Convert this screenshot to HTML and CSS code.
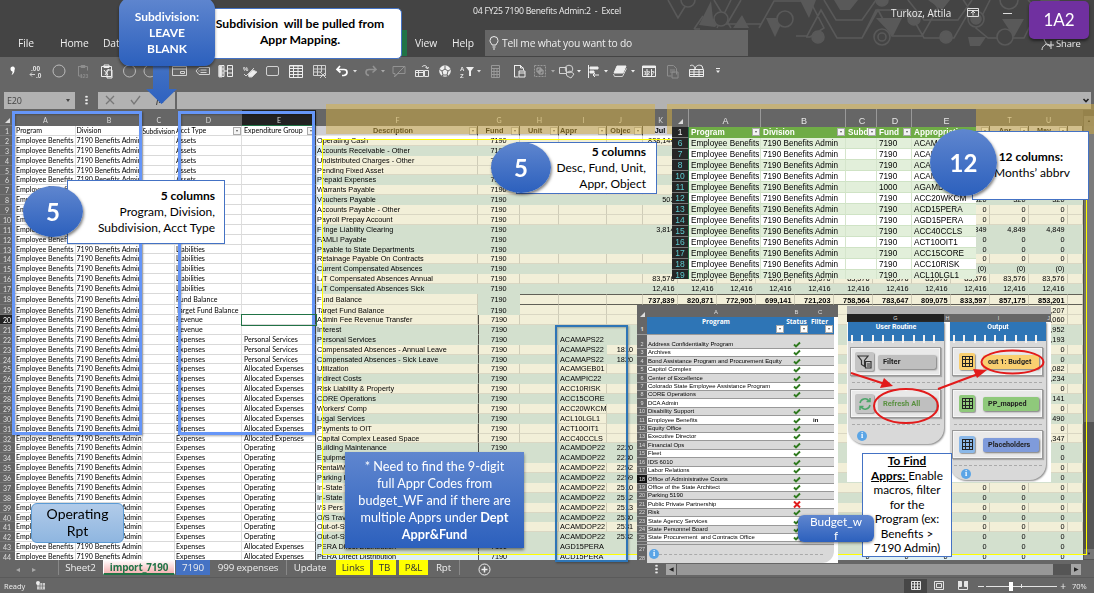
FILE: index.html
```html
<!DOCTYPE html>
<html lang="en">
<head>
<meta charset="utf-8">
<title>04 FY25 7190 Benefits Admin</title>
<link rel="stylesheet" href="styles.css">
</head>
<body>
<div class="app">
  <header class="titlebar">
    <svg class="pattern" width="434" height="57" viewBox="660 0 434 57" fill="none" stroke="#595959" stroke-width="1.6">
      <path d="M668 0l10 18 11-18M694 29l9-13M700 29h-6M714 0l17 28M731 0l-14 28M759 28l15-27h36l14 27-14 9h-4M741 0l-14 24h34M796 36h11l14-26 16 28h25l16-28 14 26h30l16-28-16-24M824 0l12 20h26l14-20M862 38l14-28h32l16 28h30l16-28-16-24M990 0l-14 28 12 10h36l14-28-10-10M908 0l16 20h34l14-20"/>
      <path d="M699 25l12-24 2 18h10l-8 8zM733 28l9-13 7 13zM800 0h16l-7 18zM834 0h24l-8 10h-10zM876 18h26l-9 18zM928 0h22l-8 10zM1002 19h22l-10 18zM968 37h18l-6 9h-10zM1040 0h20l-10 14z" fill="#595959" stroke="none"/>
      <path d="M766 18h18l-9 19z" fill="#595959" stroke="none"/>
      <g fill="#444"><circle cx="688" cy="0" r="7"/><circle cx="721" cy="19" r="7"/><circle cx="785" cy="19" r="8"/><circle cx="882" cy="37" r="8"/><circle cx="976" cy="19" r="8"/><circle cx="1005" cy="37" r="8"/><circle cx="1009" cy="0" r="9"/></g>
      <g fill="#595959"><circle cx="818" cy="37" r="6"/><circle cx="882" cy="0" r="6"/><circle cx="914" cy="19" r="6"/><circle cx="946" cy="37" r="6"/><circle cx="882" cy="37" r="4" fill="#444"/><circle cx="976" cy="19" r="5"/></g>
    </svg>
    <div class="title">04 FY25 7190 Benefits Admin:2&nbsp; -&nbsp; Excel</div>
    <div class="user">Turkoz, Attila</div>
    <svg class="winicons" width="50" height="14" viewBox="0 0 50 14" fill="none" stroke="#ddd"><path d="M.5 2.500h11v8H.5zM.5 4.500h11M6 9.500v-4M4 7l2-2 2 2M36 7.500h9"/></svg>
    <nav class="ribbon">
      <span class="rt file">File</span><span class="rt home">Home</span><span class="rt data">Data</span>
      <span class="active-edge"></span><span class="rt view">View</span><span class="rt help">Help</span>
      <div class="tell"><svg width="10" height="14" viewBox="0 0 10 14" fill="none" stroke="#eee"><path d="M3 9C3 7.500 1 7 1 4.500a4 4 0 0 1 8 0C9 7 7 7.500 7 9zM3.500 11h3M4 13h2"/></svg><span>Tell me what you want to do</span></div>
      <span class="share">Share</span>
      <svg class="shareicon" width="14" height="13" viewBox="0 0 14 13" fill="none" stroke="#ddd"><path d="M3 0c0 4 4 5 1 7-2 1-3 3-3 5M10 3v8M6 7h7M5 6c3 0 4 2 4 3"/></svg>
    </nav>
  </header>

  <div class="qat">
    <svg width="1094" height="33" viewBox="0 57 1094 33" fill="none" stroke="#d2d2d2" stroke-width="1">
      <path d="M10.500 69a2.200 2.200 0 1 1 4 1c0 2.500-1 4-3 5 .8-1.500 1.200-2.500 1-3.500-1 0-2-1-2-2.500z" fill="#fff" stroke="none"/>
      <text x="31" y="70.500" class="mini lg">.00</text><text x="36" y="77.500" class="mini lg">.0</text><path d="M30 74.500h5M32 72.500l-2 2 2 2"/>
      <g stroke="#bbb"><circle cx="59" cy="71" r="6"/><circle cx="129.500" cy="71" r="6"/><circle cx="150" cy="71" r="6"/></g>
      <g stroke="#8d8d8d"><path d="M78.500 66v10h4M78.500 66.500h9v4M81 65.500h4v2h-4z"/><text x="80" y="78" class="mini dim">123</text></g>
      <path d="M101.500 66.500h10v10h-10zM104 65h5v2.500h-5z" stroke="#eee"/><path d="M104 70l4 5M109 69l-4 6M107 70h5v8h-5z" stroke="#eee"/>
      <path d="M172.500 66.500h14v9h-14zM172.500 69h14M180.500 71.500h4v2h-4z"/>
      <path d="M199 67.500h10.500v7H199l-3-3.500zM200.500 70h6M200.500 72.500h6M198.500 71h1"/>
      <path d="M219 65.500h5v11h-5zM227.500 65.500h5v11h-5zM219 69h5M219 73h5M227 69h5M227 73h5M224 71h4" stroke="#eee"/>
      <path d="M219 66h3v11h-3z" fill="#eee"/>
      <path d="M248 74l5-4 4 2-5 5h-3z" fill="#eee"/><text x="243" y="71" class="mini">%</text><path d="M244 74l2 2 8-8"/>
      <rect x="266.500" y="66.500" width="12" height="9" rx="1.500"/>
      <path d="M289.500 65.500h13v12h-13zM289.500 68.500h13M289.500 71.500h13M289.500 74.500h13M293.500 66v11M298 66v11M289.500 66h13" stroke="#eee"/>
      <path d="M313.500 65.500h12v10h-12zM313.500 69h12M313.500 72h8M317.500 66v10M321.500 66v6M320 72l6 6M326 72l-6 6"/>
      <path d="M340 66l-3 3.500 3.500 3M337 69.500h7c4 0 4 5 0 6h-2" stroke="#fff" stroke-width="1.700"/>
      <path d="M353 70h4l-2 2.500z" fill="#ddd" stroke="none"/>
      <path d="M373 66l3 3.500-3.500 3M376 69.500h-7c-4 0-4 5 0 6" stroke="#929292" stroke-width="1.600"/><path d="M381 70h4l-2 2.500z" fill="#aaa" stroke="none"/>
      <path d="M393 66.500h12v7h-7l-3 3v-3h-2zM394 77l11-11" stroke="#929292"/>
      <path d="M415.500 70.500h8v6h-8zM415.500 72.500h8M418.500 70.500v6M422 67c1-2 5-2 5 1M425.500 67l2 2 1-2M424.500 70.500h4v6h-4z" stroke="#e6e6e6"/>
      <circle cx="445" cy="71" r="5.800" fill="#eee" stroke="none"/><path d="M445 69l3 2-1 4h-4l-1-4zM445 65.500V69M450.500 69.500l-2.500 1.500M447 75l1.500 1.500M443 75l-1.500 1.500M439.500 69.500l2.500 1.500" stroke="#666"/>
      <text x="460" y="70.500" class="mini">A</text><text x="460" y="77.500" class="mini">Z</text><path d="M466 67h8l-3 4v5h-2v-5z" fill="#eee" stroke="none"/><path d="M477 70h4l-2 2.500z" fill="#ddd" stroke="none"/>
      <path d="M491.500 65.500h8v12h-8zM491.500 68.500h8M491.500 71.500h8M491.500 74.500h8M494 69v9M497 69v9" stroke="#999"/>
      <path d="M514.500 65.500h6l3 3v2M514.500 65v12h4M520.500 65v3h3M519 71h6v6h-6zM519 73h6" stroke="#eee"/>
      <path d="M534.500 65.500h11v11h-11z" stroke="#999" stroke-dasharray="2 1"/><path d="M537 68h4v4h-4zM539 70h4v4h-4z" stroke="#aaa"/><path d="M551 70h4l-2 2.500z" fill="#aaa" stroke="none"/>
      <path d="M559.500 67.500h7v6h-7z"/><circle cx="569" cy="69" r="3.800"/><path d="M566 73l4-2 4 3-3 4-4-2z"/><path d="M577 70h4l-2 2.500z" fill="#eee" stroke="none"/>
      <path d="M588.500 65v13M590 67h8v2h-8zM590 71h4v2h-4z" fill="#eee" stroke="#eee"/><path d="M599 75h-6M595 73l-2 2 2 2" stroke="#eee"/><path d="M604 70h4l-2 2.500z" fill="#eee" stroke="none"/>
      <path d="M617 66h9l-3 7-9 0z" fill="#eee" stroke="#eee"/><path d="M613.500 74l1 2.500h8l4-8"/><path d="M631 70h4l-2 2.500z" fill="#eee" stroke="none"/>
      <path d="M642.500 66h13v10.500h-13zM642.500 67.500h13M642.500 66.500h13M647 69v7M651.500 69v7" stroke="#eee"/><text x="643.500" y="75" class="mini">12</text><text x="651" y="75" class="mini">?</text>
      <path d="M667.500 65.500h6l3 3v6M667.500 66v10h4M670 70h5M670 72h5M672 72h6v6h-6z" stroke="#8d8d8d"/>
      <path d="M689.500 69.500h14v7h-14zM689.500 72h14M689.500 74.500h14M694 69v7M699 69v7M690 66c2-2 5 0 5 3 0-3 4-5 7-3l1 3" stroke="#eee"/>
      <path d="M716 68h4v1h-4zM716 70.500h4l-2 2.500z" fill="#eee" stroke="none"/>
    </svg>
  </div>

  <div class="formulabar">
    <div class="namebox"><span>E20</span><i class="tri"></i></div>
    <div class="dots"></div>
    <div class="fxbox"><svg width="76" height="17" viewBox="0 0 76 17" fill="none" stroke="#777" stroke-width="1.300"><path d="M8 4l8 8M16 4l-8 8M33 8l3 4 6-8"/></svg><span class="fx">fx</span></div>
    <div class="finput"><svg width="8" height="6" viewBox="0 0 8 6" fill="none" stroke="#222" stroke-width="1.600"><path d="M1.500 1L4 3.500 6.500 1"/></svg></div>
  </div>

  <main class="sheetwrap">
    <div class="sheet" id="sheet"></div>
    <div class="vscroll"><span class="vbtn">▲</span><span class="vthumb"></span><span class="vbtn">▼</span></div>
  </main>

  <div class="tabbar">
    <div class="tabs">
      <span class="nav">◂</span><span class="nav nav2">▸</span>
      <span class="tab t-sheet">Sheet2</span><span class="tab t-import">import_7190</span><span class="tab t-7190">7190</span><span class="tab t-999">999 expenses</span><span class="tab t-upd">Update</span><span class="tab yel t-links">Links</span><span class="tab yel t-tb">TB</span><span class="tab yel t-pl">P&amp;L</span><span class="tab t-rpt">Rpt</span>
      <svg class="plus" width="13" height="13" viewBox="0 0 13 13" fill="none" stroke="#eee"><circle cx="6.500" cy="6.500" r="5.500"/><path d="M6.500 3.500v6M3.500 6.500h6" stroke-width="1.500"/></svg>
    </div>
    <div class="dots low"></div>
    <div class="hscroll"><span class="hbtn">◀</span><span class="hthumb"></span><span class="hbtn">▶</span></div>
  </div>
  <footer class="status">
    <span>Ready</span>
    <svg width="10" height="9" viewBox="0 0 10 9"><path d="M1 2h8v6.500H1z" fill="#ccc"/><circle cx="2" cy="2" r="2" fill="#eee"/><path d="M1 5h8M4 2v6M6.500 2v6" stroke="#666" stroke-width=".6"/></svg>
    <svg class="zoomctl" width="154" height="14" viewBox="904 579 154 14" fill="none" stroke="#e4e4e4"><rect x="904" y="579" width="23" height="14" fill="#464646" stroke="none"/><path d="M911.500 581.500h9v8h-9zM911.500 584h9M911.500 587h9M914.500 581.500v8M917.500 581.500v8M934.500 581.500h9v8h-9zM936.500 583.500h5v4h-5z"/><path d="M958.500 581.500h3v5h-3zM964.500 581.500h3v5h-3z" fill="#e4e4e4"/><path d="M958.500 581v8.500h9V581"/><path d="M978 586.500h6M986 586.500h71"/><path d="M1009 582h4v9h-4z" fill="#fff" stroke="none"/><path d="M1021.500 584v4"/></svg>
    <span class="zplus">+</span><span class="pct">70%</span>
  </footer>

  <div class="yellowarea"></div>
  <div class="yellowline"></div>
  <div class="gold gold1"></div>
  <div class="gold gold2"></div>
  <div class="frame frame1"></div>
  <div class="frame frame2"></div>
  <div class="frame frame3"></div>
  <div class="selected"></div>

  <section class="apprs" id="apprs"></section>
  <section class="programs" id="programs"></section>

  <section class="macros">
    <div class="mtop"></div>
    <div class="mhead"><b class="sel">G</b><b class="h">H</b><b class="i">I</b><b class="j">J</b></div>
    <div class="mcols">
      <div class="mcard routine">
        <div class="mtitle">User Routine</div><div class="rings"></div>
        <div class="mgroup"><span class="ico"><svg width="16" height="14" viewBox="0 0 16 14" fill="none" stroke="#333" stroke-width="1.200"><path d="M1 1h10L7.500 5.500v6l-3-2v-4zM8.500 6.500h5.500v6.500H8.500zM10 9h3M10 11h3"/></svg></span><span class="btn">Filter</span></div>
        <div class="dash"></div>
        <div class="mgroup g2"><span class="ico"><svg width="14" height="14" viewBox="0 0 14 14" fill="none" stroke="#4ca66a" stroke-width="1.500"><path d="M2 6a5 5 0 0 1 9-2M12 1v3.500H8.500M12 8a5 5 0 0 1-9 2M2 13V9.500h3.500"/></svg></span><span class="btn green-t">Refresh All</span></div>
        <div class="dash"></div><span class="info">i</span>
      </div>
      <div class="mcard output">
        <div class="mtitle">Output</div><div class="rings"></div>
        <div class="mgroup"><span class="ico or"><i class="gridico"></i></span><span class="btn or">out 1: Budget</span></div>
        <div class="dash"></div>
        <div class="mgroup g2"><span class="ico gr"><i class="gridico"></i></span><span class="btn gr">PP_mapped</span></div>
        <div class="dash"></div>
        <div class="mgroup g3"><span class="ico bl"><i class="gridico"></i></span><span class="btn bl">Placeholders</span></div>
        <div class="dash"></div><span class="info">i</span>
      </div>
    </div>
    <svg class="marks" width="204" height="176" viewBox="847 306 204 176" fill="none" stroke="#e21b1b" stroke-width="2"><ellipse cx="906" cy="406" rx="32" ry="17"/><ellipse cx="1012.500" cy="362" rx="31" ry="11.500"/><path d="M851 373l34 11M938 389l40-15"/><path d="M893 386l-13 2 4-10zM987 370l-10 8-4-9z" fill="#e21b1b" stroke="none"/></svg>
  </section>

  <div class="note n-sub"><b>Subdivision&nbsp; will be pulled from<br>Appr Mapping.</b></div>
  <svg class="arrow" width="34" height="42" viewBox="0 0 34 42"><defs><linearGradient id="ag" x2="0" y2="1"><stop offset="0" stop-color="#4472c4"/><stop offset="1" stop-color="#2e62c0"/></linearGradient></defs><path d="M8 0h16v26h8L16.500 41 1 26h7z" fill="url(#ag)"/></svg>
  <div class="bubble b-sub">Subdivision:<br>LEAVE<br>BLANK</div>
  <div class="note n-5a"><b>5 columns</b><br>Program, Division,<br>Subdivision, Acct Type</div>
  <div class="ball c-5a">5</div>
  <div class="note n-5b"><b>5 columns</b><br>Desc, Fund, Unit,<br>Appr, Object</div>
  <div class="ball c-5b">5</div>
  <div class="note n-12"><b>12 columns:</b><br>Months’ abbrv</div>
  <div class="ball c-12">12</div>
  <div class="oprpt">Operating<br>Rpt</div>
  <div class="need">* Need to find the 9-digit<br>full Appr Codes from<br>budget_WF and if there are<br>multiple Apprs under <b>Dept<br>Appr&amp;Fund</b></div>
  <div class="note n-find"><b><u>To Find</u></b><br><b><u>Apprs: </u></b>Enable<br>macros, filter<br>for the<br>Program (ex:<br>Benefits &gt;<br>7190 Admin)</div>
  <div class="wf">Budget_w<br>f</div>
  <div class="badge">1A2</div>
</div>
<script src="app.js"></script>
</body>
</html>
```

FILE: styles.css
```css
* { box-sizing: border-box; }
body { margin: 0; width: 1094px; height: 593px; overflow: hidden; font-family: Lato, "Open Sans", sans-serif; }
.app { position: relative; width: 1094px; height: 593px; background: #666; display: flex; flex-direction: column; overflow: hidden; }

/* title bar and ribbon */
.titlebar { position: relative; height: 57px; background: #444; color: #eee; font-family: "Open Sans", sans-serif; flex: none; }
.pattern { position: absolute; right: 0; top: 0; }
.title, .user, .winicons { position: absolute; white-space: nowrap; }
.title { left: 473px; top: 5px; font-size: 8.700px; line-height: 13px; letter-spacing: -.24px; }
.user { left: 891px; top: 6px; font-size: 9.900px; line-height: 14px; letter-spacing: 0; }
.winicons { left: 967px; top: 6px; }
.ribbon { position: absolute; left: 0; right: 0; top: 30px; height: 27px; font-size: 10.300px; line-height: 27px; letter-spacing: -.1px; }
.ribbon > * { position: absolute; top: 0; white-space: nowrap; }
.file { left: 18px; } .home { left: 60px; } .data { left: 103px; }
.active-edge { left: 400px; width: 7px; height: 26px; background: #217346; }
.view { left: 415px; } .help { left: 452px; }
.tell { left: 485px; width: 263px; height: 26px; background: #666; display: flex; align-items: center; gap: 3px; padding-left: 4px; font-size: 10.300px; letter-spacing: -.2px; }
.share { left: 1056px; font-size: 9.400px; }
.shareicon { left: 1041px; top: 8px !important; }

.qat { height: 33px; flex: none; background: #666; }
.qat svg { display: block; }
.mini { font: bold 6px "Liberation Sans", sans-serif; fill: #e8e8e8; stroke: none; }
.lg { font-size: 6.500px; }
.dim { fill: #8d8d8d; font-size: 5px; }

.formulabar { height: 20px; flex: none; display: flex; align-items: flex-start; padding: 2px 3px 0 4px; }
.formulabar > div { height: 17px; }
.namebox { width: 71px; background: #b2b2b2; display: flex; justify-content: space-between; align-items: center; padding: 0 5px 0 3px; font-size: 9px; color: #444; font-family: "Open Sans", sans-serif; letter-spacing: -.2px; }
.tri { border: 2.500px solid transparent; border-top: 3px solid #444; border-bottom: 0; }
.dots { width: 3px; height: 10px; background: radial-gradient(circle, #eee 1px, transparent 1.300px) 0 0 / 3px 3.400px; margin: 3px 10px 0 10px; }
.formulabar > .dots { height: 10px; }
.fxbox { width: 77px; background: #b2b2b2; position: relative; }
.fx { position: absolute; left: 58px; top: 1px; font: italic 11px "Liberation Serif", serif; color: #333; }
.finput { flex: 1; margin-left: 2px; background: #b2b2b2; display: flex; align-items: center; justify-content: flex-end; padding-right: 1px; }

/* worksheet */
.sheetwrap { display: flex; height: 450px; flex: none; overflow: hidden; }
.sheet { width: 1083px; overflow: hidden; }
.row { display: flex; height: 9.880px; line-height: 10px; white-space: nowrap; }
.row > span { flex: none; overflow: hidden; height: 100%; }
.row.heads { height: 16px; background: #666; color: #ddd; font: 7px/21px Lato, sans-serif; }
.heads > span { text-align: center; }
.heads .E { background: #222; border-bottom: 1px solid #217346; }
.r18 { height: 11px; line-height: 11px; } .r19 { height: 10.200px; line-height: 11px; }
.n { width: 15px; background: #666; color: #ddd; text-align: center; font-size: 7px; padding-right: 1px; border-bottom: 1px solid #777; }
.r20 .n { background: #222; color: #fff; }
.A { width: 60.500px; } .B { width: 67px; } .C { width: 32.500px; } .D { width: 67px; } .E { width: 74px; }
.row:not(.heads) .A, .row:not(.heads) .B, .row:not(.heads) .C, .row:not(.heads) .D, .row:not(.heads) .E { background: #fff; color: #000; font-size: 7.050px; padding-left: 1px; border-bottom: 1px solid #d9d9d9; border-right: 1px solid #dedede; }
.row.r1 .C { font-size: 6.700px !important; letter-spacing: -.1px; padding-left: 0 !important; border-right: 0 !important; }
.row:not(.heads) .E { border-right: 1px solid #555; padding-left: 2px; }
.F { width: 162px; padding-left: 1px; } .G { width: 42px; text-align: center; } .H { width: 39px; } .I { width: 48px; padding-left: 1px; } .J { width: 36px; padding-right: 9px; text-align: right; }
.K { width: 35px; } .m { width: 39px; } .V { width: 15px; }
.row:not(.heads) .K, .row:not(.heads) .m { text-align: right; padding-right: 2.500px; }
.row:not(.heads) > .x { font-family: "Liberation Sans", Arial, sans-serif; font-size: 7.300px; color: #000; background: #fff; border-right: 1px solid #dadada; border-bottom: 1px solid #e6e6e6; }
.row:not(.heads) > .x.b { background: #dfeff4; border-color: #dfeff4; }
.row:not(.heads):not(.r18):not(.r19) > .x { line-height: 9px; }
.row.r1 > .x { background: #cfcfd6; font-weight: bold; text-align: center; border-right-color: #444; }
.row.r1 > .x.m, .row.r1 > .K { text-align: center; padding-right: 0; }
.row.r1 > .I { text-align: left; }
.row.r1 > .J { padding-right: 0; }
.r18 > .H, .r18 > .I, .r18 > .J, .r18 > .K, .r18 > .m, .r18 > .V { border-top: 1.500px solid #666 !important; border-bottom: 1.500px solid #666 !important; font-weight: bold; }
.dark > .G.x { border-left: 1px solid #555 !important; }
.flt { float: right; width: 8px; height: 8px; margin-top: 1px; background: #f4f4f4; border: 1px solid #aaa; position: relative; }
.flt::after { content: ""; position: absolute; left: 1.500px; top: 2px; border: 1.500px solid transparent; border-top: 2px solid #555; border-bottom: 0; }
.cornertri { display: inline-block; border-left: 5px solid transparent; border-bottom: 5px solid #ddd; }

.vscroll { width: 11px; display: flex; flex-direction: column; align-items: center; padding: 6px 0 0 1px; background: #555; }
.vbtn { width: 10px; height: 10px; background: #777; color: #222; font-size: 4px; line-height: 10px; text-align: center; flex: none; }
.vthumb { width: 10px; height: 296px; background: #7b7b7b; margin-bottom: 127px; flex: none; }

.tabbar { height: 18px; flex: none; display: flex; font-family: "Open Sans", sans-serif; font-size: 9.800px; color: #eee; border-bottom: 1px solid #5a5a5a; }
.tabs { display: flex; width: 643px; white-space: nowrap; letter-spacing: -.15px; }
.nav { margin-left: 16px; width: 5px; font-size: 8px; line-height: 17px; color: #aaa; }
.nav2 { margin-left: 11px; }
.tab { text-align: center; line-height: 15px; height: 15px; flex: none; }
.t-sheet { width: 44px; margin-left: 21px; border-left: 1px solid #888; }
.t-import { width: 72px; margin-left: 1px; background: linear-gradient(#fff, #f6b4b4); border: 1px solid #fff; border-top: 0; border-bottom: 2px solid #217346; color: #217346; font-weight: bold; line-height: 14px; font-size: 9.900px; letter-spacing: -.2px; }
.t-7190 { width: 34px; margin-left: 1px; background: #4472c4; }
.t-999 { width: 77px; border-right: 1px solid #888; }
.t-upd { width: 46px; }
.yel { background: #ff0; color: #333; margin-left: 3px; }
.t-links { width: 34px; } .t-tb { width: 23px; } .t-pl { width: 29px; }
.t-rpt { width: 32px; border-right: 1px solid #888; }
.plus { margin: 3px 0 0 18px; }
.low { margin: 4px 8px 0 12px; height: 10px; }
.hscroll { display: flex; width: 415px; height: 11px; margin-top: 4px; background: #555; }
.hbtn { width: 10px; background: #a5a5a5; color: #222; font-size: 6px; line-height: 11px; text-align: center; }
.hthumb { width: 376px; background: #979797; margin: 0 18px 0 1px; }
.status { flex: 1; display: flex; align-items: center; font-size: 7.500px; color: #eee; padding-left: 4px; font-family: "Open Sans", sans-serif; gap: 11px; }
.zoomctl { margin-left: auto; }
.zplus { font-size: 10px; margin-left: -9px; } .pct { width: 22px; margin-left: -5px; }

/* shapes drawn over the worksheet */
.yellowarea, .yellowline { position: absolute; left: 322px; top: 139px; width: 765px; height: 416px; }
.yellowarea { background: #f2efd8; mix-blend-mode: multiply; }
.yellowline { border: 1.500px solid #ff0; }
.gold { position: absolute; top: 104px; height: 30px; background: rgba(214,176,66,.5); }
.gold1 { left: 326px; width: 329px; } .gold2 { left: 667px; width: 427px; }
.frame { position: absolute; border: 3px solid #6696f8; top: 111px; height: 324px; box-shadow: 1px 1px 2px rgba(0,0,0,.35), inset 1px 1px 2px rgba(0,0,0,.25); }
.frame1 { left: 12px; width: 130px; } .frame2 { left: 178px; width: 137px; }
.frame3 { left: 555px; top: 325px; width: 73px; height: 237px; border: 2px solid #2e75b6; }
.selected { position: absolute; left: 241px; top: 314px; width: 76px; height: 12px; border: 1.500px solid #217346; }

.apprs { position: absolute; left: 672px; top: 109px; width: 304px; height: 170px; overflow: hidden; background: #fff; font-family: "Liberation Sans", Arial, sans-serif; font-size: 8.200px; color: #000; }
.ar { display: flex; height: 11px; line-height: 11px; white-space: nowrap; }
.ar > span { overflow: hidden; padding-left: 2px; flex: none; border-right: 1px solid #d5e5cc; border-bottom: 1px solid #cfe3c5; }
.ar > .an { width: 17px; background: #262626; color: #5dc9cf; text-align: center; padding: 0; border-right: 1px solid #217346; border-bottom: 1px solid #777; font-size: 8.500px; }
.aA { width: 72px; } .aB { width: 85px; } .aC { width: 31px; } .aD { width: 35px; } .aE { width: 68px; }
.ar.even > span:not(.an) { background: #e2efda; }
.ar.ah { height: 18px; line-height: 25px; background: #666; color: #e6e6e6; font-size: 9px; }
.ar.ah > span { background: none; border: 0; border-right: 1px solid #999; text-align: center; color: #e6e6e6; }
.ar.a1 { height: 10.500px; line-height: 11px; } .ar.a1 > span:not(.an) { background: #6fac46; color: #fff; font-weight: bold; border-color: #6fac46; }
.ar.a1 .an { color: #eee; }

.programs { position: absolute; left: 637px; top: 305px; width: 201px; height: 258px; background: #fff; overflow: hidden; font-family: "Liberation Sans", Arial, sans-serif; font-size: 5.950px; color: #000; }
.pr { display: flex; height: 8.420px; width: 197px; background: #fff; align-items: flex-end; line-height: 8px; white-space: nowrap; border-bottom: 1px solid #999; }
.pr.alt { background: #d9d9d9; }
.pn { width: 10px; height: 100%; background: #666; color: #ddd; text-align: center; flex: none; font-size: 5.500px; display: flex; align-items: flex-end; justify-content: center; }
.pname { width: 137px; padding-left: 1px; } .pst { width: 25px; display: flex; justify-content: center; } .pf { padding-left: 4px; font-weight: bold; }
.ph { height: 12px; background: #666; color: #ddd; border: 0; line-height: 9px; width: 201px; }
.ph .pname, .ph .pst, .ph .pf { text-align: center; font-weight: normal; }
.p1 { height: 18px; background: #2e75b6 !important; color: #fff; font: bold 6.500px/9px "Open Sans", sans-serif; align-items: flex-start; position: relative; }
.p1 .pname { text-align: center; } .p1 .pst { display: block; text-align: center; } .p1 .pf { padding-left: 2px; }
.p1 .flt { position: absolute; top: 8px; width: 8px; height: 8px; margin: 0; background: #fff; }
.p2 { height: 14px; background: #d9d9d9; }
.n26 { height: 3px; overflow: hidden; }
.pend { height: 18px; width: 197px; background: #d9d9d9; border-radius: 0 0 12px 0; display: flex; align-items: center; }
.pend .pn { align-items: center; line-height: 9px; }
.info { width: 10px; height: 10px; border-radius: 50%; background: #5ba5e6; color: #fff; font: bold 8px/10px "Liberation Serif", serif; text-align: center; display: inline-block; }
.pend .info { margin-left: 2px; }
.pend .dash { width: 164px; border-top: 1px dashed #aaa; }
.n18 .pn { background: #111; }

.macros { position: absolute; left: 847px; top: 306px; width: 204px; height: 176px; background: #fff; font-family: Roboto, "Open Sans", sans-serif; overflow: hidden; }
.mtop { height: 8px; background: #b2b2b2; }
.mhead { height: 8px; background: #666; display: flex; font: 5.500px/8px "Liberation Sans", sans-serif; color: #ddd; text-align: center; }
.mhead b { font-weight: normal; } .mhead .sel { width: 97px; background: #222; } .mhead .h { width: 7px; } .mhead .i { width: 95px; } .mhead .j { width: 5px; }
.mcols { display: flex; gap: 6px; padding-left: 1px; align-items: flex-start; }
.mcard { width: 96px; height: 122px; background: #d9d9d9; border-radius: 0 0 16px 16px; box-shadow: 1px 1px 2px #888; }
.output { height: 158px; }
.mtitle { height: 19px; background: #2e75b6; color: #fff; font-size: 7px; font-weight: bold; line-height: 11px; text-align: center; }
.rings { height: 8px; margin: -6px 3px 0; background: repeating-linear-gradient(90deg, #f2f2f2 0 2px, transparent 2px 10.300px); position: relative; }
.mgroup { margin: 4px 3px 0 2px; height: 29px; border: 1px solid #999; box-shadow: inset 0 0 0 1px #f6f6f6, 1px 1px 1px #aaa; display: flex; align-items: center; padding-left: 4px; gap: 4px; background: #e9e9e9; }
.g2 { margin-top: 6px; } .g3 { margin-top: 5px; }
.ico { width: 19px; height: 19px; border-radius: 2px; background: #c4c4c4; display: flex; align-items: center; justify-content: center; box-shadow: 1px 1px 1px #999; flex: none; }
.btn { width: 58px; height: 14px; background: #bfbfbf; font-size: 7.500px; font-weight: bold; line-height: 14px; padding-left: 5px; border-radius: 2px; box-shadow: 1px 1px 2px #777; color: #222; white-space: nowrap; }
.output .ico { width: 16px; height: 17px; margin-left: 2px; } .output .btn { width: 56px; margin-left: 4px; font-size: 7.200px; padding-left: 5px; }
.ico.or, .btn.or { background: #f9cf70; } .ico.gr, .btn.gr { background: #8fc97b; } .ico.bl { background: #8ab8e8; } .btn.bl { background: #7f9bdb; }
.btn.green-t { color: #5a9141; }
.gridico { width: 11px; height: 11px; border: 1px solid #222; background: linear-gradient(90deg, transparent 2px, #222 2px 3px, transparent 3px 6px, #222 6px 7px, transparent 7px), linear-gradient(transparent 2px, #222 2px 3px, transparent 3px 6px, #222 6px 7px, transparent 7px); }
.mcard .dash { border-top: 1px dashed #aaa; margin: 6px 4px 0; }
.mcard .info { margin: 6px 0 0 9px; display: block; }
.output .info { margin-top: 3px; margin-left: 11px; }
.marks { position: absolute; left: 0; top: 0; }

/* callouts */
.note { position: absolute; background: #fff; border: 1px solid #4472c4; color: #000; font-size: 12px; line-height: 16px; text-align: right; white-space: nowrap; }
.n-sub { left: 210px; top: 8px; width: 192px; height: 51px; border-radius: 5px; text-align: center; padding: 7px 12px 0 0; font-size: 12.200px; }
.n-5a { left: 67px; top: 180px; width: 158px; height: 64px; padding: 7px 9px 0 0; }
.n-5b { left: 516px; top: 142px; width: 141px; height: 52px; padding: 1px 10px 0 0; }
.n-12 { left: 972px; top: 131px; width: 117px; height: 69px; padding: 17px 18px 0 0; }
.n-12 b { padding-right: 7px; }
.n-find { left: 862px; top: 453px; width: 90px; height: 104px; text-align: center; line-height: 14.500px; font-size: 11.800px; }
.arrow { position: absolute; left: 145px; top: 63px; }
.bubble { position: absolute; left: 119px; top: -2px; width: 96px; height: 68px; border-radius: 11px; background: linear-gradient(#5f86cf, #2c60bd); color: #fff; text-align: center; font-weight: bold; font-size: 12px; line-height: 16px; padding-top: 11px; box-shadow: 0 2px 3px rgba(0,0,0,.45); }
.ball { position: absolute; border-radius: 50%; background: linear-gradient(#5f86cf, #2c60bd); color: #fff; font-weight: bold; font-size: 24px; display: flex; align-items: center; justify-content: center; box-shadow: 1px 2px 3px rgba(0,0,0,.5); }
.c-5a { left: 23px; top: 186px; width: 60px; height: 51px; }
.c-5b { left: 491px; top: 142px; width: 60px; height: 51px; }
.c-12 { left: 930px; top: 129px; width: 67px; height: 67px; }
.oprpt { position: absolute; left: 31px; top: 503px; width: 93px; height: 40px; border: 1px solid #5b9bd5; border-radius: 6px; background: linear-gradient(#b1cbe9, #8fb6e0); font-size: 14px; line-height: 17px; text-align: center; padding-top: 1px; }
.need { position: absolute; left: 345px; top: 452px; width: 179px; height: 96px; background: linear-gradient(#5f86cf, #2c60bd); color: #fff; text-align: center; font-size: 12.700px; line-height: 17px; padding-top: 6px; white-space: nowrap; box-shadow: 0 2px 3px rgba(0,0,0,.5); }
.wf { position: absolute; left: 798px; top: 515px; width: 76px; height: 27px; border-radius: 6px; background: linear-gradient(#5f86cf, #2c60bd); color: #fff; text-align: center; font-size: 11.800px; line-height: 13.500px; box-shadow: 0 1px 3px rgba(0,0,0,.5); white-space: nowrap; }
.badge { position: absolute; left: 1029px; top: 1px; width: 60px; height: 38px; border-radius: 5px; background: #7030a0; color: #fff; font-size: 17px; line-height: 38px; text-align: center; box-shadow: 0 2px 3px rgba(0,0,0,.5); }
```

FILE: app.js
```js
const span = (cls, html = '') => `<span class="${cls}">${html}</span>`;
const flt = '<i class="flt"></i>';

/* main worksheet */
const desc = ['Operating Cash', 'Accounts Receivable - Other', 'Undistributed Charges - Other', 'Pending Fixed Asset', 'Prepaid Expenses', 'Warrants Payable', 'Vouchers Payable', 'Accounts Payable - Other', 'Payroll Prepay Account', 'Fringe Liability Clearing', 'FAMLI Payable', 'Payable to State Departments', 'Retainage Payable On Contracts', 'Current Compensated Absences', 'L/T Compensated Absences Annual', 'L/T Compensated Absences Sick', 'Fund Balance', 'Target Fund Balance', 'Admin Fee Revenue Transfer', 'Interest', 'Personal Services', 'Compensated Absences - Annual Leave', 'Compensated Absences - Sick Leave', 'Utilization', 'Indirect Costs', 'Risk Liability &amp; Property', 'CORE Operations', "Workers' Comp", 'Legal Services', 'Payments to OIT', 'Capital Complex Leased Space', 'Building Maintenance', 'Equipment Maintenance', 'Rental/Maintenance', 'Parking Fees', 'In-State Travel', 'In-State Fares', 'I/S Pers Travel', 'O/S Travel', 'Out-of-State Travel', 'Out-of-State Fares', 'PERA Direct Distribution', 'PERA Direct Distribution'];
const banded = new Set([3, 6, 8, 11, 12, 13, 15, 17, 21, 22, 24, 26, 28, 30, 33, 34, 36, 38, 40, 42, 43, 44]);
const appr = { 22: 'ACAMAPS22', 23: 'ACAMAPS22', 24: 'ACAMAPS22', 25: 'ACAMGEB01', 26: 'ACAMPIC22', 27: 'ACC10RISK', 28: 'ACC15CORE', 29: 'ACC20WKCM', 30: 'ACL10LGL1', 31: 'ACT10OIT1', 32: 'ACC40CCLS', 43: 'AGD15PERA', 44: 'ACD15PERA' };
for (let r = 33; r < 43; r++) appr[r] = 'ACAMDOP22';
const obj = { 23: '1810', 24: '1820', 33: '2220', 34: '2230', 35: '2252', 36: '2259', 37: '2510', 38: '2512', 39: '2513', 40: '2530', 41: '2531', 42: '2532' };
const totals = ['737,839', '820,871', '772,905', '699,141', '721,203', '758,564', '783,647', '809,075', '833,597', '857,175', '853,201'];
const amount = { 2: '838,144', 8: '320', 9: '0', 10: '0', 11: '4,849', 12: '0', 13: '0', 14: '0', 15: '(0)', 16: '83,576', 17: '12,416', 19: '2,207', 20: '3,060', 21: '2,952', 22: '9,193', 23: '0', 24: '0', 25: '2,082', 26: '5,234', 28: '141', 30: '490', 32: '1,347' };
const julOnly = { 8: '503', 9: '', 10: '', 11: '3,814', 12: '', 13: '', 14: '', 15: '' };
const months = ['Jul', 'Aug', 'Sep', 'Oct', 'Nov', 'Dec', 'Jan', 'Feb', 'Mar', 'Apr', 'May'];

function acctType(r) {
  if (r < 8) return 'Assets';
  if (r < 18) return 'Liabilities';
  return { 18: 'Fund Balance', 19: 'Target Fund Balance', 20: 'Revenue', 21: 'Revenue' }[r] || 'Expenses';
}
function group(r) {
  if (r < 22) return '';
  if (r < 25) return 'Personal Services';
  return r < 33 || r > 42 ? 'Allocated Expenses' : 'Operating';
}

let out = '<div class="row heads">' + span('n', '<i class="cornertri"></i>') +
  'ABCDEFGHIJK'.split('').map(c => span(c, c)).join('') + 'LMNOPQRSTU'.split('').map(c => span('m', c)).join('') + '</div>';
out += '<div class="row r1">' + span('n', '1') + span('A', 'Program') + span('B', 'Division') + span('C', 'Subdivision') +
  span('D', flt + 'Acct Type') + span('E', flt + 'Expenditure Group') + span('F x', flt + 'Description') + span('G x', flt + 'Fund') +
  span('H x', flt + 'Unit') + span('I x', flt + 'Appr') + span('J x', flt + 'Objec') +
  months.map((m, i) => span((i ? 'm' : 'K') + ' x', (i ? flt : '') + m)).join('') + span('V x') + '</div>';
for (let r = 2; r <= 44; r++) {
  const b = banded.has(r) ? ' b' : '';
  const mid = r === 18 || r === 19;
  out += `<div class="row r${r}${r > 19 ? ' dark' : ''}">` + span('n', r) + span('A', 'Employee Benefits') + span('B', '7190 Benefits Admin') +
    span('C') + span('D', acctType(r)) + span('E', group(r)) + span('F x' + b, desc[r - 2]) + span('G x' + (mid ? ' b' : b), '7190') +
    span('H x' + b) + span('I x' + (r === 30 ? '' : r === 23 ? ' b' : b), appr[r] || '') + span('J x' + b, obj[r] || '');
  for (let i = 0; i < 11; i++) {
    let v = r === 18 ? totals[i] : amount[r] !== undefined ? amount[r] : r > 22 ? '0' : '';
    if (i === 0 && julOnly[r] !== undefined) v = julOnly[r];
    if (i && r === 2) v = '';
    out += span((i ? 'm' : 'K') + ' x' + b, v);
  }
  out += span('V x' + b) + '</div>';
}
document.getElementById('sheet').innerHTML = out;

/* appropriation lookup */
const codes = [[6, 7190, 'ACAMAPS22'], [7, 7190, 'ACAMDOP22'], [8, 7190, 'ACAMGEB01'], [10, 7190, 'ACAMPIC22'], [11, 1000, 'AGAMDOP22'], [12, 7190, 'ACC20WKCM'], [13, 7190, 'ACD15PERA'], [14, 7190, 'AGD15PERA'], [15, 7190, 'ACC40CCLS'], [16, 7190, 'ACT10OIT1'], [17, 7190, 'ACC15CORE'], [18, 7190, 'ACC10RISK'], [19, 7190, 'ACL10LGL1']];
document.getElementById('apprs').innerHTML =
  '<div class="ar ah">' + span('an', '<i class="cornertri"></i>') + 'ABCDE'.split('').map(c => span('a' + c, c)).join('') + '</div>' +
  '<div class="ar a1">' + span('an', '1') + span('aA', flt + 'Program') + span('aB', flt + 'Division') + span('aC', flt + 'Subd') + span('aD', flt + 'Fund') + span('aE', 'Appropriation') + '</div>' +
  codes.map(([n, f, c], i) => `<div class="ar${i % 2 ? '' : ' even'}">` + span('an', n) + span('aA', 'Employee Benefits') + span('aB', '7190 Benefits Admin') + span('aC') + span('aD', f) + span('aE', c) + '</div>').join('');

/* program status list */
const check = '<svg width="8" height="7" viewBox="0 0 8 7" fill="none" stroke="#2f7a1f" stroke-width="1.900"><path d="M1 3.500l2 2L7 1.500"/></svg>';
const cross = '<svg width="8" height="7" viewBox="0 0 8 7" fill="none" stroke="#e01b1b" stroke-width="2"><path d="M1 .5l6 6M7 .5l-6 6"/></svg>';
const programs = ['Address Confidentiality Program', 'Archives', 'Bond Assistance Program and Procurement Equity', 'Capitol Complex', 'Center of Excellence', 'Colorado State Employee Assistance Program', 'CORE Operations', 'DCA Admin', 'Disability Support', 'Employee Benefits', 'Equity Office', 'Executive Director', 'Financial Ops', 'Fleet', 'IDS 6010', 'Labor Relations', 'Office of Administrative Courts', 'Office of the State Architect', 'Parking 5190', 'Public Private Partnership', 'Risk', 'State Agency Services', 'State Personnel Board', 'State Procurement&nbsp; and Contracts Office'];
document.getElementById('programs').innerHTML =
  '<div class="pr ph">' + span('pn', '<i class="cornertri"></i>') + span('pname', 'A') + span('pst', 'B') + span('pf', '&nbsp;&nbsp;&nbsp;C') + '</div>' +
  '<div class="pr p1">' + span('pn', '1') + span('pname', 'Program') + span('pst', 'Status') + span('pf', 'Filter') +
  '<i class="flt" style="left:139px"></i><i class="flt" style="left:163px"></i><i class="flt" style="left:188px"></i></div>' +
  programs.map((p, i) => {
    const n = i + 2;
    return `<div class="pr n${n}${n % 2 ? '' : ' alt'}${n === 2 ? ' p2' : ''}">` + span('pn', n) + span('pname', p) + span('pst', n === 9 ? '' : n === 21 ? cross : check) + span('pf', n === 11 ? 'in' : '') + '</div>';
  }).join('') +
  '<div class="pr alt n26">' + span('pn') + '</div>' +
  '<div class="pend">' + span('pn', '27<br>28') + '<span class="info">i</span><span class="dash"></span></div>';
```
